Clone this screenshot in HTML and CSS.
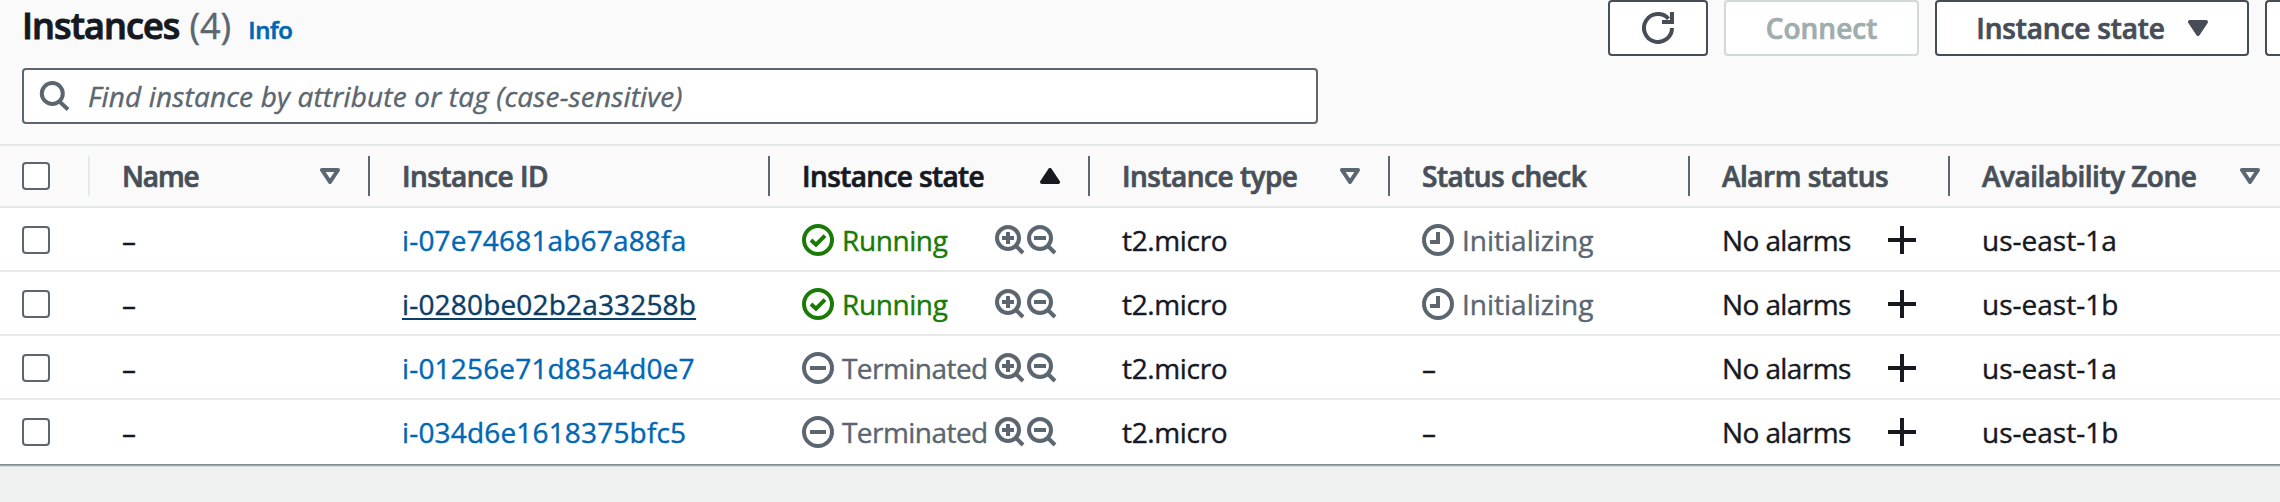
FILE: index.html
```html
<!DOCTYPE html>
<html lang="en">
<head>
<meta charset="utf-8">
<title>Instances</title>
<link rel="stylesheet" href="styles.css">
</head>
<body>
<svg class="sprite" aria-hidden="true">
  <symbol id="search" viewBox="0 0 32 32"><circle cx="14.3" cy="13.5" r="10.5"/><path d="M22 22l8 7.5"/></symbol>
  <symbol id="refresh" viewBox="0 0 32 32"><path d="M30 16a14 14 0 1 1-3.5-9.3"/><path d="M30 0v10H20"/></symbol>
  <symbol id="ok" viewBox="0 0 32 32"><circle cx="16" cy="16" r="14"/><path d="m9 16 5 4.7 9-9"/></symbol>
  <symbol id="stop" viewBox="0 0 32 32"><circle cx="16" cy="16" r="14"/><path d="M8 16h16"/></symbol>
  <symbol id="clock" viewBox="0 0 32 32"><circle cx="16" cy="16" r="14"/><path d="M16 8v10H8"/></symbol>
  <symbol id="zin" viewBox="0 0 32 32"><circle cx="15" cy="14" r="11"/><path d="M9 14h12M15 8v12M22.5 21.5l7.5 7.5"/></symbol>
  <symbol id="zout" viewBox="0 0 32 32"><circle cx="15" cy="14" r="11"/><path d="M9 14h12M22.5 21.5l7.5 7.5"/></symbol>
  <symbol id="plus" viewBox="0 0 32 32"><path d="M2 16h28M16 2v28"/></symbol>
  <symbol id="sort" viewBox="0 0 20 16"><path d="M2 2h16l-8 12z"/></symbol>
</svg>

<main class="panel">
  <header class="head">
    <div class="titlebar">
      <h1 class="title">Instances</h1><span class="count">(4)</span><a class="info">Info</a>
      <div class="actions">
        <button class="btn refresh"><svg class="icon"><use href="#refresh"/></svg></button>
        <button class="btn connect">Connect</button>
        <button class="btn state">Instance state<svg class="tri solid"><use href="#sort"/></svg></button>
        <button class="btn more"></button>
      </div>
    </div>
    <div class="search"><svg class="icon"><use href="#search"/></svg><span>Find instance by attribute or tag (case-sensitive)</span></div>
  </header>

  <div class="row thead">
    <div class="cell light"><i class="box"></i></div>
    <div class="cell"><span class="name">Name</span><svg class="tri"><use href="#sort"/></svg></div>
    <div class="cell"><span>Instance ID</span></div>
    <div class="cell active"><span>Instance state</span><svg class="tri solid up"><use href="#sort"/></svg></div>
    <div class="cell"><span>Instance type</span><svg class="tri"><use href="#sort"/></svg></div>
    <div class="cell"><span>Status check</span></div>
    <div class="cell"><span>Alarm status</span></div>
    <div class="cell"><span>Availability Zone</span><svg class="tri"><use href="#sort"/></svg></div>
  </div>

  <div class="row">
    <div class="cell"><i class="box"></i></div><div class="cell">–</div>
    <div class="cell"><a class="id">i-07e74681ab67a88fa</a></div>
    <div class="cell status running"><svg class="icon"><use href="#ok"/></svg><span>Running</span><div class="zooms"><svg class="icon"><use href="#zin"/></svg><svg class="icon"><use href="#zout"/></svg></div></div>
    <div class="cell type">t2.micro</div>
    <div class="cell status pending"><svg class="icon"><use href="#clock"/></svg><span>Initializing</span></div>
    <div class="cell alarm"><span>No alarms</span><svg class="icon"><use href="#plus"/></svg></div>
    <div class="cell">us-east-1a</div>
  </div>
  <div class="row">
    <div class="cell"><i class="box"></i></div><div class="cell">–</div>
    <div class="cell"><a class="id hover">i-0280be02b2a33258b</a></div>
    <div class="cell status running"><svg class="icon"><use href="#ok"/></svg><span>Running</span><div class="zooms"><svg class="icon"><use href="#zin"/></svg><svg class="icon"><use href="#zout"/></svg></div></div>
    <div class="cell type">t2.micro</div>
    <div class="cell status pending"><svg class="icon"><use href="#clock"/></svg><span>Initializing</span></div>
    <div class="cell alarm"><span>No alarms</span><svg class="icon"><use href="#plus"/></svg></div>
    <div class="cell">us-east-1b</div>
  </div>
  <div class="row">
    <div class="cell"><i class="box"></i></div><div class="cell">–</div>
    <div class="cell"><a class="id">i-01256e71d85a4d0e7</a></div>
    <div class="cell status ended"><svg class="icon"><use href="#stop"/></svg><span>Terminated</span><div class="zooms"><svg class="icon"><use href="#zin"/></svg><svg class="icon"><use href="#zout"/></svg></div></div>
    <div class="cell type">t2.micro</div>
    <div class="cell">–</div>
    <div class="cell alarm"><span>No alarms</span><svg class="icon"><use href="#plus"/></svg></div>
    <div class="cell">us-east-1a</div>
  </div>
  <div class="row">
    <div class="cell"><i class="box"></i></div><div class="cell">–</div>
    <div class="cell"><a class="id">i-034d6e1618375bfc5</a></div>
    <div class="cell status ended"><svg class="icon"><use href="#stop"/></svg><span>Terminated</span><div class="zooms"><svg class="icon"><use href="#zin"/></svg><svg class="icon"><use href="#zout"/></svg></div></div>
    <div class="cell type">t2.micro</div>
    <div class="cell">–</div>
    <div class="cell alarm"><span>No alarms</span><svg class="icon"><use href="#plus"/></svg></div>
    <div class="cell">us-east-1b</div>
  </div>
</main>
</body>
</html>
```

FILE: styles.css
```css
* { box-sizing: border-box; }

body {
  margin: 0;
  height: 502px;
  overflow: hidden;
  background: #eff1f1;
  color: #16191f;
  font: 400 28px/40px "Open Sans", "Noto Sans", sans-serif;
  -webkit-text-stroke: .4px;
}

.sprite { display: none; }

.panel {
  width: 2280px;
  height: 464px;
  background: #fff;
  box-shadow: 0 1px 0 #828d92, 0 2px 0 #9fa7aa, 0 3px 0 #d8dcdd;
}

.head {
  height: 144px;
  padding-left: 22px;
  background: #fafafa;
}

.titlebar {
  display: flex;
  height: 68px;
  align-items: flex-start;
}

.title {
  margin: 0;
  font-size: 36px;
  line-height: 52px;
  font-weight: 600;
  -webkit-text-stroke: 1px;
  letter-spacing: -.9px;
}

.count {
  margin-left: 10px;
  color: #5b6670;
  font-size: 36px;
  line-height: 52px;
}

.info {
  margin-left: 17px;
  color: #0067b5;
  font-size: 24px;
  line-height: 60px;
  font-weight: 600;
  -webkit-text-stroke: .6px;
  letter-spacing: -.4px;
}

.actions {
  display: flex;
  flex: none;
  gap: 16px;
  margin-left: auto;
}

.btn {
  display: flex;
  align-items: center;
  justify-content: center;
  flex: none;
  height: 56px;
  padding: 0;
  border: 2px solid #474d57;
  border-radius: 4px;
  background: #fff;
  color: #474d57;
  font: 600 28px/52px "Open Sans", "Noto Sans", sans-serif;
  -webkit-text-stroke: .7px;
}

.refresh { width: 100px; }
.connect { width: 195px; border-color: #d2d8d8; color: #a0adad; }
.state { width: 314px; gap: 23px; letter-spacing: -.15px; }
.more { width: 15px; border-right: 0; border-radius: 4px 0 0 4px; }

.icon {
  flex: none;
  width: 32px;
  height: 32px;
  fill: none;
  stroke: currentColor;
  stroke-width: 4;
}

.tri {
  flex: none;
  width: 20px;
  height: 16px;
  fill: none;
  stroke: #5b6670;
  stroke-width: 4;
  stroke-linejoin: round;
}

.tri.solid { fill: currentColor; stroke: currentColor; }
.tri.up { transform: rotate(180deg); }

.search {
  display: flex;
  align-items: center;
  width: 1296px;
  height: 56px;
  padding-left: 14px;
  border: 2px solid #5b6670;
  border-radius: 4px;
  background: #fff;
  color: #5b6670;
}

.search span {
  margin-left: 18px;
  font-style: italic;
  letter-spacing: .16px;
}

.row {
  display: grid;
  grid-template-columns: 90px 280px 400px 320px 300px 300px 260px 330px;
  height: 64px;
  padding-top: 2px;
  border-bottom: 2px solid #e6ebea;
}

.row:last-child { border-color: transparent; }

.cell {
  display: flex;
  align-items: center;
  padding-left: 32px;
  white-space: nowrap;
}

.cell:first-child { padding-left: 22px; }

.thead {
  padding-top: 0;
  border-top: 2px solid #e6ebea;
  background: #fafafa;
  color: #474f58;
  font-weight: 600;
  -webkit-text-stroke: .7px;
  letter-spacing: -.5px;
}

.thead .cell {
  height: 40px;
  margin-top: 10px;
  border-right: 2px solid #5b6670;
}

.thead .cell.light { border-color: #e6ebea; }
.thead .cell:last-child { border-right: 0; }
.thead .active { color: #16191f; letter-spacing: -.6px; }
.thead .name { letter-spacing: -1.1px; }
.thead .tri { margin: 0 28px 0 auto; }
.thead .cell:last-child .tri { margin-right: 20px; }

.box {
  width: 28px;
  height: 28px;
  border: 2px solid #5b6670;
  border-radius: 4px;
  background: #fff;
}

.id { color: #0067b5; letter-spacing: .17px; }
.id.hover {
  color: #0a3e66;
  text-decoration: underline;
  text-decoration-thickness: 2px;
  text-underline-offset: 3px;
}

.status span { margin-left: 8px; }
.running > .icon, .running > span { color: #1a7a06; }
.running > span { letter-spacing: -.4px; }
.pending, .ended { color: #5b6670; }
.ended span { letter-spacing: -.55px; }
.zooms { display: flex; margin: 0 33px 0 auto; color: #5b6670; }
.type { letter-spacing: -.35px; }
.alarm span { letter-spacing: -.6px; }
.alarm .icon { margin: 0 32px 0 auto; }
```
